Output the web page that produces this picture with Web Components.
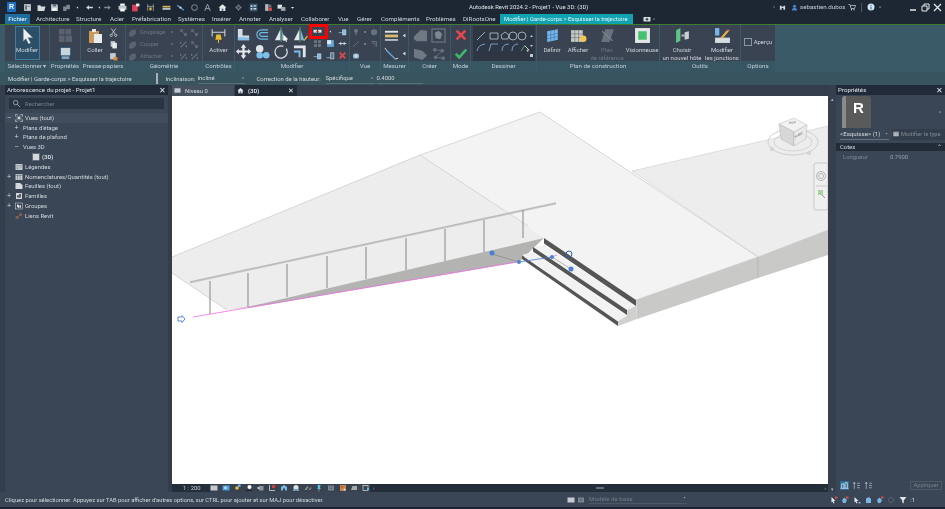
<!DOCTYPE html>
<html lang="fr">
<head>
<meta charset="utf-8">
<title>Revit</title>
<style>
  html, body { margin: 0; padding: 0; width: 945px; height: 509px; overflow: hidden; background: #1b2330; }
  body { font: 5.9px Roboto, "Liberation Sans", sans-serif; color: #d3d9e0; }
</style>
</head>
<body>
<rv-app></rv-app>

<script>
// small icon set, all drawn on a 16x16 box
const ICONS = {
  doc: '<rect x="2" y="2" width="12" height="12" fill="#c9d0d6"/><rect x="4" y="4" width="3" height="8" fill="#5c6670"/><rect x="8" y="5" width="4" height="1.5" fill="#5c6670"/>',
  folder: '<path d="M1 4h5l1 2h8l-2 8H1z" fill="#d6dadd"/>',
  save: '<path d="M2 2h10l2 2v10H2z" fill="#c3c9ce"/><rect x="5" y="2" width="6" height="4" fill="#5c6670"/><rect x="4" y="9" width="8" height="5" fill="#eee"/>',
  sync: '<path d="M2 6h6v8H2zM8 3h6v8H8z" fill="#7d8691"/>',
  dot: '<path d="M6 8l3-2v4z" fill="#d6dadd"/>',
  caret: '<path d="M5 7h6l-3 3z" fill="#d6dadd"/>',
  undo: '<path d="M2 8l5-4v2.5h7v3H7V12z" fill="#d6dadd"/>',
  redo: '<path d="M14 8L9 4v2.5H2v3h7V12z" fill="#7d8691"/>',
  print: '<rect x="4" y="1" width="8" height="4" fill="#fff"/><rect x="1" y="5" width="14" height="7" fill="#bfc6cc"/><rect x="4" y="10" width="8" height="5" fill="#fff"/>',
  reddoc: '<rect x="2" y="3" width="10" height="12" fill="#e0405a"/><rect x="9" y="1" width="6" height="5" fill="#e8eef2"/>',
  measure: '<path d="M3 2v12M13 2v12M3 6h10" stroke="#d6dadd" fill="none"/><rect x="6" y="8" width="4" height="5" fill="#e8b53a"/>',
  wall: '<rect x="1" y="5" width="14" height="3" fill="#d7b45a"/><rect x="1" y="9" width="14" height="3" fill="#c4ccd3"/>',
  dim: '<path d="M2 4l12 9" stroke="#5aa3dc" stroke-width="2"/><circle cx="8" cy="8" r="2" fill="#cfd5da"/>',
  tag: '<circle cx="8" cy="8" r="5" fill="none" stroke="#6c7682" stroke-width="2"/>',
  letter: '<path d="M3 14L8 2l5 12M5 10h6" stroke="#a0a8b0" stroke-width="1.6" fill="none"/>',
  home: '<path d="M8 2l7 6h-2v6H3V8H1z" fill="#e3e6e9"/><rect x="6.5" y="10" width="3" height="4" fill="#59636f"/>',
  ring: '<path d="M8 2v12M2 8h12" stroke="#8d96a1"/><circle cx="8" cy="8" r="3.5" fill="#3a4352" stroke="#aeb5bc"/>',
  win: '<rect x="1" y="1" width="14" height="14" fill="#33566f"/><path d="M3 4h3v3H3zM3 9h3v3H3zM8 4h5v1.500H8zM8 6h5v1H8zM8 9h5v1.500H8zM8 11h5v1H8z" fill="#d6dadd"/>',
  closew: '<rect x="2" y="2" width="6" height="12" fill="#aeb5bc"/><rect x="8" y="8" width="6" height="6" fill="#d84c4c"/><rect x="8" y="3" width="5" height="4" fill="#6d7681"/>',
  sw: '<rect x="1" y="3" width="8" height="7" fill="#dfe3e6"/><rect x="7" y="7" width="8" height="7" fill="#9ea6ae"/>',
  bino: '<path d="M2 4h4v9H2zM10 4h4v9h-4zM6 6h4v3H6z" fill="#cfd6dc"/>',
  user: '<circle cx="8" cy="5" r="3.500" fill="#4a86d0"/><path d="M2 15c0-5 3-6 6-6s6 1 6 6z" fill="#4a86d0"/>',
  cart: '<path d="M1 3h3l2 8h7l2-6H5" stroke="#c6d2de" stroke-width="1.500" fill="none"/><circle cx="7" cy="13.500" r="1.300" fill="#c6d2de"/><circle cx="12" cy="13.500" r="1.300" fill="#c6d2de"/>',
  info: '<circle cx="8" cy="8" r="7" fill="#d7e4ef"/><path d="M7 7h2v6H7zM7 3.500h2v2H7z" fill="#1f6fb0"/>',
  cursor: '<path d="M4 1l9 9H8.500l2.500 5-2 1-2.500-5L4 13.500z" fill="#eef1f4" stroke="#5c6670" stroke-width=".4"/>',
  props: '<rect x="2" y="1" width="12" height="14" fill="#204d6e"/><rect x="3" y="2" width="10" height="8" fill="#c9d3da"/><rect x="4" y="11" width="8" height="3" fill="#8fa0ad"/>',
  propsoff: '<path d="M1 1h6v6H1zM8 1h6v6H8zM8 8h7v7H8zM1 8h6v7H1z" fill="#59626e"/>',
  paste: '<rect x="2" y="3" width="10" height="12" fill="#c99a5b"/><rect x="5" y="1" width="4" height="3" fill="#e8e8e8"/><rect x="7" y="6" width="8" height="9" fill="#e8ecef"/>',
  cut: '<path d="M4 1l7 10M12 1L5 11" stroke="#d6dadd" stroke-width="1.400"/><circle cx="4" cy="13" r="2" fill="none" stroke="#d6dadd" stroke-width="1.300"/><circle cx="12" cy="13" r="2" fill="none" stroke="#d6dadd" stroke-width="1.300"/>',
  copy: '<rect x="3" y="2" width="8" height="10" fill="#c3c9ce"/><rect x="6" y="5" width="8" height="10" fill="#e8ecef"/>',
  match: '<rect x="2" y="2" width="10" height="11" fill="#c4ccd3"/><rect x="8" y="9" width="7" height="6" fill="#d98f3c"/>',
  off1: '<path d="M2 8l5-5h7v7l-5 5H2z" fill="#5a636f"/>',
  off2: '<path d="M2 2h5v5H2zM9 9h5v5H9z" fill="#5f6873"/><path d="M7 7l2 2" stroke="#737c87"/>',
  off3: '<path d="M3 13L13 3M3 3v4M13 13V9" stroke="#6a737e" stroke-width="2" fill="none"/>',
  activer: '<path d="M2 2v7M14 2v7M2 5h12" stroke="#cdd3d8" fill="none"/><path d="M6 7h4l1 5H5z" fill="#edb92d"/><path d="M8 12v3" stroke="#edb92d"/>',
  align: '<path d="M2 2h5v7h7v5H2z" fill="#d5dde3"/><path d="M2 11h12v3H2z" fill="#86c1ea"/>',
  offset: '<path d="M14 3H7a5 5 0 000 10h7M14 6H7a2 2 0 000 4h7" stroke="#6dbbe8" stroke-width="1.300" fill="none"/>',
  mirror1: '<path d="M1 14L7 2v12z" fill="#dfe5ea"/><path d="M8 14V2l4 12z" fill="#8aa1b0"/><path d="M7.500 0v16" stroke="#44a36c"/><path d="M10 8l5 5-2 .5 1 2-1 .5-1-2-2 1z" fill="#fff"/>',
  mirror2: '<path d="M1 14L7 2v12z" fill="#dfe5ea"/><path d="M8 14V2l4 12z" fill="#7cb2dd"/><path d="M7.500 0v16" stroke="#44a36c"/><path d="M11 14l4-5 1 1-4 5z" fill="#e0b03c"/>',
  splitg: '<rect x="1" y="5" width="6" height="5" fill="#e8edf0"/><rect x="9" y="5" width="6" height="5" fill="#e8edf0"/><rect x="5" y="7" width="6" height="1.500" fill="#d93a3a"/>',
  move: '<path d="M8 0l3 4H9.200v3H13V5l3 3-3 3V9H9.200v3H11l-3 4-3-4h1.800V9H3v2L0 8l3-3v2h3.800V4H5z" fill="#e6eaed"/>',
  copy2: '<circle cx="5" cy="5" r="4" fill="#dfe5ea"/><circle cx="5" cy="12" r="3.500" fill="#7cbfe9"/><circle cx="12" cy="12" r="3.500" fill="#7cbfe9"/>',
  rotate: '<path d="M13 5a6.500 6.500 0 11-3-2.500" stroke="#dde2e6" stroke-width="1.300" fill="none"/>',
  trim: '<path d="M1 3h11v11" stroke="#dfe5ea" stroke-width="3" fill="none"/><path d="M1 8h6v6" stroke="#7cbfe9" stroke-width="2" fill="none"/>',
  redx: '<path d="M3 3l10 10M13 3L3 13" stroke="#e4484e" stroke-width="3"/>',
  check: '<path d="M2 9l4 4 8-9" stroke="#3dbb6c" stroke-width="3" fill="none"/>',
  grid: '<path d="M2 2h5v5H2zM9 2h5v5H9zM2 9h5v5H2zM9 9h5v5H9z" fill="#6c7682"/>',
  blues: '<rect x="2" y="2" width="12" height="12" fill="#62a9dc"/><rect x="2" y="2" width="7" height="7" fill="#e8edf0"/>',
  pinch: '<path d="M1 8h14M5 5v6M11 5v6" stroke="#dde2e6" stroke-width="1.500"/>',
  flag: '<path d="M1 10h7M8 5h6v9H8z" stroke="#dde2e6" fill="#7cbfe9" stroke-width="1"/>',
  flag2: '<path d="M1 12h7M8 3h6v11H8z" stroke="#dde2e6" fill="#527da0" stroke-width="1"/>',
  bulb: '<circle cx="8" cy="6" r="4" fill="#6c7682"/><rect x="6" y="10" width="4" height="4" fill="#5c6570"/>',
  pen: '<path d="M2 14L13 3" stroke="#6c7682" stroke-width="1.500"/>',
  cube: '<path d="M2 5l6-3 6 3v7l-6 3-6-3z" fill="#68717c"/>',
  angle: '<path d="M3 3h10v10M3 6h7v7" stroke="#626b76" stroke-width="2" fill="none"/>',
  lens: '<rect x="2" y="3" width="12" height="10" rx="3" fill="#8ab0cc"/><rect x="5" y="5" width="6" height="6" fill="#d3dde4"/>',
  dimh: '<rect x="1" y="3" width="14" height="2" fill="#dfe5ea"/><rect x="1" y="7" width="14" height="3" fill="#d9bb70"/><rect x="1" y="12" width="14" height="1.500" fill="#dfe5ea"/>',
  dima: '<path d="M1 2l2 3 9 9 3-1" stroke="#dfe5ea" fill="none"/><path d="M3 5l9 9" stroke="#5ca8de" stroke-width="1.500"/>',
  solid1: '<path d="M1 9l7-7 7 1v11H4L1 12z" fill="#6f7883"/>',
  solid2: '<path d="M1 3l9 2 5 5-5 5-9-3z" fill="#6f7883"/>',
  hatch: '<rect x="1" y="1" width="14" height="14" fill="none" stroke="#6f7883" stroke-width="1.200"/><path d="M4 5l4-2 4 3-2 6-5-1z" fill="#7c8590"/>',
  nodes: '<circle cx="4" cy="4" r="2" fill="#656e79"/><circle cx="12" cy="5" r="2" fill="#656e79"/><circle cx="5" cy="12" r="2" fill="#656e79"/><circle cx="13" cy="13" r="2" fill="#656e79"/><path d="M4 4l8 1-7 7 8 1" stroke="#656e79" fill="none"/>',
  gridblue: '<path d="M3 4l10-2v10L3 14z" fill="#76b6ea"/><path d="M3 8l10-2M3 11l10-2M6.300 3.500v10M9.600 2.800v10" stroke="#3c77b0" stroke-width=".6"/>',
  gridwhite: '<path d="M1 3h11v11H1z" fill="#c7c9c4"/><path d="M1 6.500h11M1 10h11M4.500 3v11M8 3v11" stroke="#6a7178" stroke-width=".6"/><circle cx="12.500" cy="11" r="3" fill="#f3c74f"/>',
  planoff: '<path d="M2 14l4-12h8l-4 12z" fill="#68717c"/><path d="M3 4l10 9" stroke="#7b848f"/>',
  viewer: '<rect x="1" y="1" width="14" height="14" fill="#e4e7e9"/><rect x="4" y="4" width="8" height="8" fill="#43c16e"/>',
  host: '<path d="M2 3l4-2v12l-4 2z" fill="#5fc786"/><rect x="7" y="7" width="3" height="2" fill="#aab2b8"/><path d="M10 5l4-1v7l-4 1z" fill="#c8ced3"/>',
  joint: '<rect x="1" y="1" width="4" height="7" fill="#76b8ea"/><rect x="1" y="10" width="14" height="5" fill="#d5dde3"/><path d="M6 10l6-7 2 1-6 7z" fill="#e5b04a"/><path d="M12 3l1-1 2 1-1 1z" fill="#e15a5a"/>',
  search: '<circle cx="6.500" cy="6.500" r="4" fill="none" stroke="#a5aeb8" stroke-width="1.500"/><path d="M9.500 9.500l5 5" stroke="#a5aeb8" stroke-width="1.500"/>',
  views: '<rect x="3" y="3" width="10" height="10" fill="#707a85"/><path d="M1 1h4M1 1v4M15 1h-4M15 1v4M1 15h4M1 15v-4M15 15h-4M15 15v-4" stroke="#f2f4f6"/><circle cx="8" cy="8" r="2" fill="#eee"/>',
  sheet3d: '<rect x="2" y="2" width="12" height="12" fill="#d6d9dc"/><rect x="1" y="1" width="14" height="14" fill="none" stroke="#8b949e"/>',
  legend: '<rect x="1" y="2" width="14" height="12" fill="#c4c9ce"/><path d="M3 5h4M3 8h4M3 11h4M9 5h4M9 8h4" stroke="#626c77"/>',
  sched: '<rect x="1" y="2" width="14" height="12" fill="#c4c9ce"/><path d="M1 5h14M5 2v12M10 2v12" stroke="#59636e"/>',
  sheets: '<path d="M1 2h9l5 4v8H1z" fill="#d6d9dc"/>',
  fam: '<rect x="2" y="2" width="12" height="12" fill="#d6d9dc"/><path d="M5 11V7h2v4M9 11V4h2v7" stroke="#465261"/>',
  group: '<rect x="1" y="2" width="14" height="12" fill="none" stroke="#dbe0e4"/><path d="M4 5l4 1v6l-4-2zM9 6l3 1v4l-3 1z" fill="#e2e5e8"/>',
  link: '<path d="M3 12l4-4M9 8l4-4" stroke="#b5734a" stroke-width="1.600"/><circle cx="4" cy="11" r="2.500" fill="none" stroke="#b5734a" stroke-width="1.200"/><circle cx="11" cy="5" r="2.500" fill="none" stroke="#b5734a" stroke-width="1.200"/>',
  tile: '<rect x="1" y="3" width="14" height="10" fill="#c5cad0"/>',
  tile3d: '<rect x="1" y="3" width="14" height="10" fill="#4f9ede"/><rect x="4" y="5" width="6" height="5" fill="#a8d2f0"/>',
  sun: '<circle cx="8" cy="8" r="3.500" fill="#f2c23c"/><rect x="10" y="1" width="5" height="5" fill="#6fb2e0"/>',
  shadow: '<circle cx="9" cy="6" r="4" fill="#fff"/><path d="M1 12h13v2H1z" fill="#222"/>',
  hand: '<rect x="4" y="4" width="9" height="9" fill="#8b949e"/><path d="M1 6h4v4H1z" fill="#c5cad0"/>',
  cropred: '<path d="M3 2v11h11" stroke="#d9e0e6" stroke-width="1.500" fill="none"/><rect x="8" y="2" width="6" height="6" fill="#d43b3b"/>',
  view2: '<path d="M2 13V6l6-4 6 4v7h-4V9H6v4z" fill="#79b8e6"/>',
  view3: '<circle cx="8" cy="7" r="5" fill="#dfe3e6"/><rect x="2" y="10" width="12" height="4" fill="#6e98b6"/>',
  glasses: '<path d="M1 12l6-8 2 2-4 6zM9 12l5-6 1 2-3 4z" fill="#8f98a2"/>',
  pin: '<path d="M5 2h6l-1 6 2 2H4l2-2z" fill="#57c2e8"/><path d="M8 10v5" stroke="#d6dadd"/>',
  offv: '<rect x="2" y="3" width="12" height="10" fill="#7d8691"/><path d="M5 6h6M5 9h6" stroke="#404a56"/>',
  layers: '<rect x="2" y="2" width="12" height="12" fill="#c0864a"/><circle cx="6" cy="6" r="2" fill="#d94d4d"/><circle cx="11" cy="11" r="2" fill="#e3e6e9"/>',
  flat: '<path d="M2 12l3-8h9v8z" fill="#a2a9b1"/>',
  frame: '<rect x="2" y="3" width="10" height="10" fill="none" stroke="#e3e6e9" stroke-width="1.300"/><rect x="10" y="8" width="4" height="4" fill="#5fb7e4"/>',
  selred: '<path d="M3 2l8 8H7l2 4-2 1-2-4-2 2z" fill="#e8ecef"/><rect x="10" y="1" width="5" height="4" fill="#d94d4d"/>',
  selred2: '<path d="M2 8l5-5 5 5-3 6H4z" fill="#78b6e4"/><rect x="10" y="1" width="5" height="4" fill="#d94d4d"/>',
  selg: '<path d="M3 2l8 8H7l2 4-2 1-2-4-2 2z" fill="#e8ecef"/><path d="M11 12h4v3h-4z" fill="#7fb8e0"/>',
  selb: '<path d="M4 14V5l6-3 4 4v8z" fill="#79b8e6"/>',
  hollow: '<circle cx="8" cy="8" r="5" fill="none" stroke="#7a838e" stroke-width="1.500" stroke-dasharray="2 1"/>',
  funnel: '<path d="M1 2h14L9.500 9v6l-3-2V9z" fill="#e3e6e9"/>',
  tree: '<path d="M1 13h14M3 13V5h4v8M9 13V3h4v10" stroke="#e4eef6" stroke-width="1.300" fill="none"/>',
  sortup: '<path d="M4 2v12M2 5l2-3 2 3M9 4h5M9 8h5M9 12h5" stroke="#bcd0de" stroke-width="1.200" fill="none"/>',
  camera: '<rect x="1" y="4" width="14" height="9" rx="1" fill="#d9dde0"/><circle cx="8" cy="8.500" r="2.500" fill="#39424f"/>'
};

class RvIcon extends HTMLElement {
  constructor() {
    super();
    this.attachShadow({ mode: "open" });
  }
  connectedCallback() {
    const size = this.getAttribute("size") || 10;
    const name = this.getAttribute("name");
    this.shadowRoot.innerHTML = `
      <style>
        :host { display: inline-flex; width: ${size}px; height: ${size}px; flex: none; }
        svg { width: 100%; height: 100%; display: block; }
      </style>
      <svg viewBox="0 0 16 16">${ICONS[name] || ""}</svg>`;
  }
}
customElements.define("rv-icon", RvIcon);

const icon = (name, size) => `<rv-icon name="${name}" size="${size || 10}"></rv-icon>`;

class RvTitlebar extends HTMLElement {
  constructor() {
    super();
    this.attachShadow({ mode: "open" });
  }
  connectedCallback() {
    // [icon, cell width] so the quick access icons keep their spacing
    const quick = [["doc",15],["folder",13],["save",12],["sync",13],["dot",8],["undo",17],["dot",2],["redo",15],["print",14],["reddoc",13],["measure",17],["wall",14],["dim",15],["tag",13],["letter",12],["home",18],["ring",15],["win",15],["closew",14],["sw",13],["caret",9]];
    this.shadowRoot.innerHTML = `
      <style>
        :host { display: flex; height: 14px; align-items: center; background: #1d2733; color: #d8dde2; }
        .logo { width: 9px; height: 10px; margin: 0 4px 0 7px; background: #1c6ec4; color: #fff; font: bold 7px "Liberation Sans", sans-serif; text-align: center; line-height: 10px; flex: none; border-radius: 1px; }
        .quick { display: flex; width: 448px; flex: none; align-items: center; }
        .quick span { display: flex; justify-content: center; flex: none; }
        .title { width: 302px; padding-left: 1px; flex: none; color: #dfe3e7; white-space: nowrap; }
        .right { display: flex; align-items: center; flex: 1; gap: 2px; }
        .gapped { margin-left: 3px; display: flex; }
        .user { width: 46px; color: #c2cfdb; font-size: 6.200px; white-space: nowrap; }
        .sep { width: 1px; height: 9px; background: #4b5561; margin: 0 3px; }
        .wc { display: flex; margin-left: 24px; gap: 3px; align-items: center; }
      </style>
      <div class="logo">R</div>
      <div class="quick">${quick.map(([n, w]) => `<span style="width:${w}px">${icon(n, 9)}</span>`).join("")}</div>
      <div class="title">Autodesk Revit 2024.2 - Projet1 - Vue 3D: (3D)</div>
      <div class="right">
        ${icon("dot", 6)}${icon("bino", 7)}<span class="gapped">${icon("user", 7)}</span>
        <span class="user">sebastien.dubos</span>
        ${icon("cart", 8)}<span class="sep"></span>${icon("info", 8)}${icon("caret", 6)}
        <span class="wc">
          <svg width="9" height="9" viewBox="0 0 9 9"><path d="M1 7h6" stroke="#e4e7ea" stroke-width="1.500"/></svg>
          <svg width="9" height="9" viewBox="0 0 9 9"><path d="M1 3h5v5H1zM3 3V1h5v5H6" stroke="#e4e7ea" fill="none"/></svg>
          <svg width="9" height="9" viewBox="0 0 9 9"><path d="M1 1l7 7M8 1L1 8" stroke="#e4e7ea" stroke-width="1.300"/></svg>
        </span>
      </div>`;
  }
}
customElements.define("rv-titlebar", RvTitlebar);

class RvTabs extends HTMLElement {
  constructor() {
    super();
    this.attachShadow({ mode: "open" });
  }
  connectedCallback() {
    const tabs = [["Architecture",40],["Structure",34],["Acier",22],["Préfabrication",46],["Systèmes",34],["Insérer",27],["Annoter",30],["Analyser",32],["Collaborer",37],["Vue",19],["Gérer",24],["Compléments",45],["Problèmes",37],["DiRootsOne",37]];
    this.shadowRoot.innerHTML = `
      <style>
        :host { display: flex; height: 10px; background: #1d2733; align-items: stretch; padding-left: 5px; border-bottom: 1px solid #3d7d2f; line-height: 10px; color: #cfd6dc; font-size: 6.200px; }
        span { flex: none; white-space: nowrap; }
        .file { width: 25px; background: #1e6d9e; color: #fff; text-align: center; margin-right: 6px; }
        .ctx { width: 133px; background: #12a3b3; color: #e2f4f6; padding-left: 4px; box-sizing: border-box; font-size: 5.900px; }
        .cam { margin-left: 10px; display: flex; align-items: center; }
      </style>
      <span class="file">Fichier</span>
      ${tabs.map(([t, w]) => `<span style="width:${w}px">${t}</span>`).join("")}
      <span class="ctx">Modifier | Garde-corps &gt; Esquisser la trajectoire</span>
      <span class="cam">${icon("camera", 8)}${icon("caret", 6)}</span>`;
  }
}
customElements.define("rv-tabs", RvTabs);

// one ribbon panel: its tools in the slot, its name in the strip below
class RvPanel extends HTMLElement {
  constructor() {
    super();
    this.attachShadow({ mode: "open" });
  }
  connectedCallback() {
    this.shadowRoot.innerHTML = `
      <style>
        :host { display: flex; flex-direction: column; flex: none; margin-right: 1px; }
        .body { flex: 1; background: #3a4352; display: flex; align-items: flex-start; justify-content: var(--just, center); padding-top: 1px; gap: var(--gap, 2px); min-height: 0; }
        .label { height: 11px; background: #375563; text-align: center; line-height: 11px; color: #c3ced6; white-space: nowrap; font-size: 6.200px; }
      </style>
      <div class="body"><slot></slot></div>
      <div class="label">${this.getAttribute("label")}</div>`;
    this.style.width = this.getAttribute("w") + "px";
  }
}
customElements.define("rv-panel", RvPanel);

class RvTool extends HTMLElement {
  constructor() {
    super();
    this.attachShadow({ mode: "open" });
  }
  connectedCallback() {
    const size = this.getAttribute("size") || 16;
    const off = this.hasAttribute("off");
    this.shadowRoot.innerHTML = `
      <style>
        :host { display: flex; flex-direction: column; align-items: center; text-align: center; line-height: 8px; white-space: nowrap; color: ${off ? "#6d7682" : "#cdd4da"}; flex: none; font-size: 6px; }
        :host([sel]) { background: #2c4f68; outline: 1px solid #3f7ba3; outline-offset: -1px; width: 25px; height: 34px; }
        .ic { height: 17px; display: flex; align-items: center; margin: 1px 0 2px; }
      </style>
      <div class="ic">${icon(this.getAttribute("icon"), size)}</div>
      <div><slot></slot></div>`;
  }
}
customElements.define("rv-tool", RvTool);

// rows of small icons, names separated by spaces
class RvCluster extends HTMLElement {
  constructor() {
    super();
    this.attachShadow({ mode: "open" });
  }
  connectedCallback() {
    const cols = this.getAttribute("cols") || 3;
    const cell = this.getAttribute("cell") || 11;
    const size = this.getAttribute("size") || 9;
    const names = this.getAttribute("icons").split(" ");
    this.shadowRoot.innerHTML = `
      <style>
        :host { display: grid; grid-template-columns: repeat(${cols}, ${cell}px); grid-auto-rows: 12px; align-items: center; justify-items: center; flex: none; }
      </style>
      ${names.map((n) => (n === "_" ? "<span></span>" : icon(n, size))).join("")}`;
  }
}
customElements.define("rv-cluster", RvCluster);

class RvRibbon extends HTMLElement {
  constructor() {
    super();
    this.attachShadow({ mode: "open" });
  }
  connectedCallback() {
    this.shadowRoot.innerHTML = `
      <style>
        :host { display: flex; height: 47px; background: #3a5a67; padding-left: 5px; color: #cdd4da; position: relative; }
        .off3 { display: grid; grid-template-columns: 10px 27px 6px; grid-auto-rows: 12px; align-items: center; color: #6d7681; column-gap: 2px; }
        .draw { width: 62px; height: 36px; background: #2e3644; margin-top: 0; padding: 4px 0 0 2px; box-sizing: border-box; }
        .check { display: flex; align-items: center; gap: 2px; margin-top: 12px; color: #cdd4da; }
        .check i { width: 6px; height: 6px; border: 1px solid #8c96a2; display: block; }
        /* red callout drawn over the ribbon */
        .callout { position: absolute; left: 309px; top: -1px; width: 19px; height: 15px; border: 3px solid #f00; box-sizing: border-box; pointer-events: none; }
      </style>
      <rv-panel label="Sélectionner ▾" w="44"><rv-tool icon="cursor" size="17" sel>Modifier</rv-tool></rv-panel>
      <rv-panel label="Propriétés" w="30"><rv-cluster cols="1" cell="18" size="15" style="grid-auto-rows:18px" icons="propsoff props"></rv-cluster></rv-panel>
      <rv-panel label="Presse-papiers" w="44" style="--gap:4px">
        <rv-tool icon="paste">Coller</rv-tool>
        <rv-cluster cols="1" cell="12" size="9" icons="cut copy match"></rv-cluster>
      </rv-panel>
      <rv-panel label="Géométrie" w="76" style="--gap:3px">
        <div class="off3">
          ${icon("off1", 9)}<span>Grugeage</span>${icon("dot", 6)}
          ${icon("off1", 9)}<span>Couper</span>${icon("dot", 6)}
          ${icon("off1", 9)}<span>Attacher</span>${icon("dot", 6)}
        </div>
        <rv-cluster cols="2" cell="11" size="9" icons="off2 off2 off3 off2 off3 off3"></rv-cluster>
      </rv-panel>
      <rv-panel label="Contrôles" w="31"><rv-tool icon="activer" size="17">Activer</rv-tool></rv-panel>
      <rv-panel label="Modifier" w="114" style="--gap:0px;--just:flex-start">
        <rv-cluster cols="4" cell="19" size="15" icons="align offset mirror1 mirror2 move copy2 rotate trim" style="grid-auto-rows:17px;margin-left:-1px"></rv-cluster>
        <rv-cluster cols="3" size="9" icons="splitg dot flag grid blues pinch flag flag2 redx" style="grid-template-columns:14px 12px 12px;margin-top:-1px"></rv-cluster>
      </rv-panel>
      <rv-panel label="Vue" w="30"><rv-cluster cols="3" cell="9" size="8" icons="bulb dot cube pen dot angle lens _ _"></rv-cluster></rv-panel>
      <rv-panel label="Mesurer" w="27" style="--gap:0px"><rv-cluster cols="2" size="15" style="grid-template-columns:19px 6px;grid-auto-rows:18px" icons="dimh dot dima dot"></rv-cluster></rv-panel>
      <rv-panel label="Créer" w="41"><rv-cluster cols="2" cell="18" size="15" style="grid-auto-rows:18px" icons="solid1 hatch solid2 nodes"></rv-cluster></rv-panel>
      <rv-panel label="Mode" w="19"><rv-cluster cols="1" cell="16" size="14" style="grid-auto-rows:18px" icons="redx check"></rv-cluster></rv-panel>
      <rv-panel label="Dessiner" w="65">
        <div class="draw">
          <svg width="60" height="30" viewBox="0 0 60 30" fill="none" stroke="#b9c8d3" stroke-width=".8">
            <path d="M2 10L10 2M15 3h8v6h-8zM30 2l4 3-1 4h-6l-1-4zM42 6a4 4 0 10-8 0 4 4 0 008 0M51 6a4 4 0 10-8 0 4 4 0 008 0"/>
            <path d="M2 21q1-6 8-7M14 21l2-7h7M27 21q0-7 7-7M37 21q0-7 6-7" stroke="#7fb8e6"/>
            <path d="M46 21l4-6" stroke="#4fc07a"/>
            <path d="M50 16l4 4-2 0 1 2" stroke="#eee"/>
            <path d="M55 7l1.500-2 1.500 2zM55 15l1.500 2 1.500-2zM55 24h3v3h-3z" fill="#b9c8d3" stroke="none"/>
          </svg>
        </div>
      </rv-panel>
      <rv-panel label="Plan de construction" w="122" style="--gap:0px;--just:flex-start">
        <rv-tool icon="gridblue" size="17" style="width:30px">Définir</rv-tool>
        <rv-tool icon="gridwhite" size="17" style="width:22px">Afficher</rv-tool>
        <rv-tool icon="planoff" size="17" off style="width:36px">Plan<br>de référence</rv-tool>
        <rv-tool icon="viewer" size="17" style="width:34px">Visionneuse</rv-tool>
      </rv-panel>
      <rv-panel label="Outils" w="80" style="--gap:0px;--just:flex-start">
        <rv-tool icon="host" size="17" style="width:44px">Choisir<br>un nouvel hôte</rv-tool>
        <rv-tool icon="joint" size="17" style="width:36px">Modifier<br>les jonctions</rv-tool>
      </rv-panel>
      <rv-panel label="Options" w="34"><div class="check"><i></i>Aperçu</div></rv-panel>
      <div class="callout"></div>`;
  }
}
customElements.define("rv-ribbon", RvRibbon);

class RvOptionbar extends HTMLElement {
  constructor() {
    super();
    this.attachShadow({ mode: "open" });
  }
  connectedCallback() {
    this.shadowRoot.innerHTML = `
      <style>
        :host { display: flex; height: 13px; align-items: center; background: #37545f; color: #d3d9de; padding-left: 8px; white-space: nowrap; }
        .ctx { width: 148px; flex: none; }
        .bar { width: 1.500px; height: 11px; background: #a8b0b7; margin-right: 8px; flex: none; }
        .lbl { flex: none; }
        .sel { display: flex; justify-content: space-between; align-items: center; border-bottom: 1px solid #5a6e78; height: 11px; flex: none; box-sizing: border-box; }
      </style>
      <span class="ctx">Modifier | Garde-corps &gt; Esquisser la trajectoire</span>
      <span class="bar"></span>
      <span class="lbl" style="width:32px">Inclinaison:</span>
      <span class="sel" style="width:48px">Incliné ${icon("caret", 6)}</span>
      <span class="lbl" style="width:69px;margin-left:11px">Correction de la hauteur:</span>
      <span class="sel" style="width:49px">Spécifique ${icon("caret", 6)}</span>
      <span class="sel" style="width:46px;margin-left:2px">0.4000</span>`;
  }
}
customElements.define("rv-optionbar", RvOptionbar);

const paneHeader = `
  .head { height: 10px; background: #212a38; display: flex; justify-content: space-between; align-items: center; padding: 0 2px 0 2px; color: #dde2e7; line-height: 10px; flex: none; font-size: 6.200px; }
  .x { font: 8px "Liberation Sans", sans-serif; color: #e2e6ea; }
`;

class RvBrowser extends HTMLElement {
  constructor() {
    super();
    this.attachShadow({ mode: "open" });
  }
  connectedCallback() {
    // [sign x, sign, icon x, icon, text, bold, selected], x in page pixels
    const rows = [
      [9, "−", 15, "views", "Vues (tout)", 0, 1],
      [16.5, "+", 0, "", "Plans d'étage", 0],
      [16.5, "+", 0, "", "Plans de plafond", 0],
      [16.5, "−", 0, "", "Vues 3D", 0],
      [0, "", 32, "sheet3d", "(3D)", 1],
      [0, "", 15, "legend", "Légendes", 0],
      [9, "+", 15, "sched", "Nomenclatures/Quantités (tout)", 0],
      [0, "", 15, "sheets", "Feuilles (tout)", 0],
      [9, "+", 15, "fam", "Familles", 0],
      [9, "+", 15, "group", "Groupes", 0],
      [0, "", 15, "link", "Liens Revit", 0]
    ];
    this.shadowRoot.innerHTML = `
      <style>
        :host { display: flex; flex-direction: column; width: 163px; margin: 0 4px 0 5px; background: #3a4556; flex: none; color: #d3d9df; }
        ${paneHeader}
        .search { height: 11px; margin: 3px 4px 4px; background: #2a3342; display: flex; align-items: center; gap: 4px; padding-left: 3px; color: #78828e; flex: none; }
        ul { list-style: none; margin: 0; padding: 0; }
        li { display: flex; height: 9.800px; align-items: center; white-space: nowrap; position: relative; }
        li.on { background: #414c5d; }
        .sign { position: absolute; width: 5px; font: 7px "Liberation Sans", sans-serif; text-align: center; line-height: 8px; }
        .ic { display: flex; flex: none; margin-right: 2px; }
      </style>
      <div class="head"><span>Arborescence du projet - Projet1</span><span class="x">✕</span></div>
      <div class="search">${icon("search", 9)}Rechercher</div>
      <ul>
        ${rows.map(([sx, sign, ix, ic, text, bold, on]) => {
          const left = ic ? ix - 5 : 18;
          const signPart = sign ? `<span class="sign" style="left:${sx - 7.5}px">${sign}</span>` : "";
          const iconPart = ic ? `<span class="ic">${icon(ic, 8)}</span>` : "";
          return `<li class="${on ? "on" : ""}" style="padding-left:${left}px">${signPart}${iconPart}<span style="${bold ? "font-weight:700" : ""}">${text}</span></li>`;
        }).join("")}
      </ul>`;
  }
}
customElements.define("rv-browser", RvBrowser);

class RvDoctabs extends HTMLElement {
  constructor() {
    super();
    this.attachShadow({ mode: "open" });
  }
  connectedCallback() {
    this.shadowRoot.innerHTML = `
      <style>
        :host { display: flex; height: 11px; background: #333d4c; align-items: stretch; flex: none; }
        .t { display: flex; align-items: center; width: 62px; gap: 4px; padding-left: 2px; background: #465160; margin-right: 1px; box-sizing: border-box; }
        .t.on { background: #222b38; width: 62px; color: #e6e9ec; font-weight: 600; position: relative; }
        .x { margin-left: auto; margin-right: 3px; font: 7px "Liberation Sans", sans-serif; }
      </style>
      <div class="t">${icon("tile", 7)}Niveau 0</div>
      <div class="t on">${icon("home", 7)}(3D)<span class="x">✕</span></div>`;
  }
}
customElements.define("rv-doctabs", RvDoctabs);

// model view, viewBox is in page pixels to make tracing easier
class RvCanvas extends HTMLElement {
  constructor() {
    super();
    this.attachShadow({ mode: "open" });
  }
  connectedCallback() {
    const posts = [[210,281,314],[248,273,307],[287,264,297],[327,256,288],[366,247,279],[406,238,270],[445,229,261],[484,220,252],[523,210,238]];
    const handle = (x, y) => `<g transform="translate(${x} ${y})"><path d="M-4 -2h4l0-1.500 3 3.500-3 3.500 0-1.500h-4z" fill="#fff" stroke="#4d7fd0" stroke-width=".9"/></g>`;
    this.shadowRoot.innerHTML = `
      <style>
        :host { display: block; flex: 1; min-height: 0; background: #fff; position: relative; }
        svg { display: block; width: 656px; height: 388px; }
        text { font-family: Roboto, "Liberation Sans", sans-serif; font-size: 3px; fill: #666; }
      </style>
      <svg viewBox="172 96 656 388" xmlns="http://www.w3.org/2000/svg">
        <rect x="172" y="96" width="656" height="388" fill="#fff"/>
        <!-- far slab -->
        <path d="M632 171L828 126V230L758 257Z" fill="#ededed" stroke="#cdcdcd" stroke-width=".6"/>
        <!-- near slab top -->
        <path d="M172 257L420 155L528 226L544 238L523 243L460 258L248 307L227 310L172 273Z" fill="#ededed"/>
        <path d="M420 155L540 112L758 257L636 300L544 238L528 226Z" fill="#f3f3f3"/>
        <path d="M172 257L420 155L540 112L758 257L636 300M172 273L227 310M420 155L528 226" fill="none" stroke="#c9c9c9" stroke-width=".7"/>
        <!-- front faces -->
        <path d="M636 300L758 257L828 230V255L758 278L637 319Z" fill="#c9cac8"/>
        <path d="M758 257V278" stroke="#adadab" stroke-width=".6"/>
        <!-- sloped wall under the railing -->
        <path d="M248 307L544 238L519 262L248 308Z" fill="#b3b3b1"/>
        <path d="M227 310L248 307L519 262L460 272Z" fill="#b3b3b1"/>
        <!-- stairs -->
        <path d="M544 245L636 306L627 310L533 247Z" fill="#f2f2f2"/>
        <path d="M533 252L627 316L618 321L522 255Z" fill="#f2f2f2"/>
        <path d="M636 306L637 319L618 326V321L627 316V310Z" fill="#d0d1cf"/>
        <path d="M544 238L636 300V306L544 243.500Z" fill="#555"/>
        <path d="M533 247L627 310V315L533 251.500Z" fill="#555"/>
        <path d="M522 255.500L618 321.500V326L522 259Z" fill="#555"/>
        <!-- railing -->
        <path d="M190 282L556 203" stroke="#bdbdbd" stroke-width="1.500"/>
        <path d="M190 283L556 204" stroke="#a0a0a0" stroke-width=".4"/>
        ${posts.map(([x, a, b]) => `<path d="M${x} ${a}V${b}" stroke="#8f8f8f" stroke-width="1.100"/>`).join("")}
        <!-- sketch path -->
        <path d="M193 317L517 262" stroke="#f06ee8" stroke-width=".8"/>
        <path d="M519 262L552 257" stroke="#4a7fd6" stroke-width=".8"/>
        <path d="M552 257L557 255" stroke="#f06ee8" stroke-width=".8"/>
        <path d="M492 254L519 262M552 257L571 269" stroke="#777" stroke-width=".5"/>
        <circle cx="519" cy="262" r="2" fill="#4a7fd6"/>
        <circle cx="552" cy="257" r="2" fill="#4a7fd6"/>
        <circle cx="492" cy="253" r="2.500" fill="#4a7fd6"/>
        <circle cx="571" cy="269" r="2.500" fill="#4a7fd6"/>
        <circle cx="569" cy="254" r="3" fill="none" stroke="#2f5fb0"/>
        ${handle(182, 319)}
        <!-- view cube -->
        <ellipse cx="793" cy="142" rx="25" ry="13" fill="none" stroke="#cfcfcf"/>
        <ellipse cx="793" cy="142" rx="19" ry="9" fill="none" stroke="#d4d4d4"/>
        <circle cx="772" cy="149" r="1.500" fill="#ddd" stroke="#bbb" stroke-width=".5"/>
        <circle cx="809" cy="153" r="1.500" fill="#ddd" stroke="#bbb" stroke-width=".5"/>
        <path d="M779 124L794 118L807 125L794 132Z" fill="#f2f2f2" stroke="#aaa" stroke-width=".4"/>
        <path d="M779 124L794 132V146L781 139Z" fill="#d7d7d7" stroke="#aaa" stroke-width=".4"/>
        <path d="M794 132L807 125L806 139L794 146Z" fill="#eaeaea" stroke="#aaa" stroke-width=".4"/>
        <text x="789" y="124" transform="rotate(-8 789 124)">HAUT</text>
        <text x="795" y="138" transform="rotate(-28 795 138)">AVANT</text>
        <rect x="814" y="163" width="14" height="47" rx="2" fill="#efefef" stroke="#c9c9c9"/>
        <circle cx="821" cy="176" r="4.500" fill="none" stroke="#b4b4b4"/>
        <circle cx="821" cy="176" r="2.500" fill="none" stroke="#b4b4b4"/>
        <path d="M816 186H827" stroke="#c9c9c9"/>
        <rect x="818" y="190" width="5" height="5" fill="#a9d3a0"/>
        <path d="M822 195l3 3" stroke="#999"/>
      </svg>`;
  }
}
customElements.define("rv-canvas", RvCanvas);

class RvViewbar extends HTMLElement {
  constructor() {
    super();
    this.attachShadow({ mode: "open" });
  }
  connectedCallback() {
    const icons = "tile tile3d sun shadow hand cropred view2 view3 glasses pin offv layers flat frame".split(" ");
    this.shadowRoot.innerHTML = `
      <style>
        :host { display: flex; height: 8px; align-items: center; background: #242d3a; flex: none; padding-left: 11px; color: #c6ccd2; position: relative; }
        .scale { width: 27px; flex: none; }
        .ics { display: flex; gap: 3.700px; flex: none; background: #39434f; height: 8px; align-items: center; }
        .lt { margin-left: 3px; color: #8d96a0; }
        .thumb { position: absolute; left: 424px; top: 3px; width: 8px; height: 2px; background: #66707c; }
        .rt { position: absolute; right: 2px; top: 0; font-size: 6px; line-height: 8px; color: #aab2ba; }
      </style>
      <span class="scale">1 : 200</span>
      <span class="ics">${icons.map((n) => icon(n, 8)).join("")}</span>
      <span class="lt">‹</span>
      <span class="thumb"></span>
      <span class="rt">›</span>`;
  }
}
customElements.define("rv-viewbar", RvViewbar);

class RvProps extends HTMLElement {
  constructor() {
    super();
    this.attachShadow({ mode: "open" });
  }
  connectedCallback() {
    this.shadowRoot.innerHTML = `
      <style>
        :host { display: flex; flex-direction: column; flex: 1; background: #3a4556; color: #d3d9df; min-width: 0; }
        ${paneHeader}
        .type { height: 33px; padding-left: 6px; display: flex; flex: none; box-sizing: border-box; justify-content: space-between; align-items: center; padding-right: 2px; }
        .rlogo { width: 29px; height: 32px; background: linear-gradient(90deg, #8a8a8a 0 4px, #5a5a5a 4px); border-radius: 3px 3px 0 0; color: #fff; font: bold 15px "Liberation Sans", sans-serif; text-align: center; line-height: 23px; padding-left: 4px; box-sizing: border-box; }
        .filter { height: 12px; display: flex; align-items: center; flex: none; padding-left: 4px; margin-top: 0; white-space: nowrap; font-size: 6.200px; }
        .filter .pick { width: 49px; display: flex; justify-content: space-between; align-items: center; flex: none; border-bottom: 1px solid #66727f; height: 11px; }
        .filter .edit { display: flex; gap: 2px; color: #7f8995; align-items: center; margin-left: 3px; padding-left: 1px; background: #333d4c; height: 11px; flex: 1; font-size: 5.800px; }
        .sec { height: 8px; background: #222b38; display: flex; justify-content: space-between; align-items: center; padding: 0 3px 0 4px; margin-top: 3px; flex: none; line-height: 8px; }
        .row { display: grid; grid-template-columns: 47px auto; padding: 2px 4px 0 7px; color: #7f8995; line-height: 8px; }
        .row b { font-weight: 400; color: #95a0ab; }
        .foot { margin-top: auto; display: flex; height: 10px; align-items: center; padding: 0 3px 2px 4px; gap: 3px; }
        .foot .on { background: #2d6f9a; height: 9px; width: 9px; display: flex; }
        .apply { margin-left: auto; border: 1px solid #4f5a67; color: #78828e; padding: 0 2px; line-height: 7px; width: 26px; text-align: center; }
      </style>
      <div class="head"><span>Propriétés</span><span class="x">✕</span></div>
      <div class="type"><div class="rlogo">R</div>${icon("caret", 6)}</div>
      <div class="filter">
        <span class="pick">&lt;Esquisse&gt; (1) ${icon("caret", 5)}</span>
        <span class="edit">${icon("sched", 6)}Modifier le type</span>
      </div>
      <div class="sec"><span>Cotes</span><span>⌃</span></div>
      <div class="row"><span>Longueur</span><b>0.7900</b></div>
      <div class="foot">
        <span class="on">${icon("tree", 9)}</span>${icon("sortup", 9)}${icon("sortup", 9)}
        <span class="apply">Appliquer</span>
      </div>`;
  }
}
customElements.define("rv-props", RvProps);

class RvStatus extends HTMLElement {
  constructor() {
    super();
    this.attachShadow({ mode: "open" });
  }
  connectedCallback() {
    const icons = "selred selred2 selg selb selred2 hollow funnel".split(" ");
    this.shadowRoot.innerHTML = `
      <style>
        :host { display: flex; height: 15px; align-items: center; background: #3a4556; padding-left: 5px; white-space: nowrap; color: #d4dae0; flex: none; }
        .msg { width: 562px; flex: none; font-size: 5.800px; }
        .mid { display: flex; gap: 2px; align-items: center; flex: none; color: #717b87; font-size: 6.200px; }
        .mid .pick { width: 98px; margin-left: 2px; display: flex; justify-content: space-between; border-bottom: 1px solid #4d5764; }
        .sel { display: flex; gap: 3.500px; align-items: center; margin-left: auto; margin-right: 30px; flex: none; }
      </style>
      <span class="msg">Cliquez pour sélectionner. Appuyez sur TAB pour afficher d'autres options, sur CTRL pour ajouter et sur MAJ pour désactiver.</span>
      <span class="mid">${icon("tile", 8)}${icon("offv", 8)}<span class="pick">Modèle de base ${icon("caret", 5)}</span></span>
      <span class="sel">${icons.map((n) => icon(n, 8)).join("")}:1</span>`;
  }
}
customElements.define("rv-status", RvStatus);

class RvApp extends HTMLElement {
  constructor() {
    super();
    this.attachShadow({ mode: "open" });
  }
  connectedCallback() {
    this.shadowRoot.innerHTML = `
      <style>
        :host { display: flex; flex-direction: column; width: 945px; height: 509px; overflow: hidden; filter: blur(.3px); background: #1b2330; }
        .work { display: flex; height: 407px; background: #333d4c; flex: none; }
        .center { display: flex; flex-direction: column; width: 656px; flex: none; }
        .gutter { width: 8px; flex: none; display: flex; flex-direction: column; align-items: center; justify-content: space-between; padding-top: 11px; color: #aab2ba; font-size: 5px; background: #353f4e; }
        .foot { flex: 1; background: #1b2330; }
      </style>
      <rv-titlebar></rv-titlebar>
      <rv-tabs></rv-tabs>
      <rv-ribbon></rv-ribbon>
      <rv-optionbar></rv-optionbar>
      <div class="work">
        <rv-browser></rv-browser>
        <div class="center">
          <rv-doctabs></rv-doctabs>
          <rv-canvas></rv-canvas>
          <rv-viewbar></rv-viewbar>
        </div>
        <div class="gutter"><span>▴</span><span>▾</span></div>
        <rv-props></rv-props>
      </div>
      <rv-status></rv-status>
      <div class="foot"></div>`;
  }
}
customElements.define("rv-app", RvApp);
</script>
</body>
</html>
